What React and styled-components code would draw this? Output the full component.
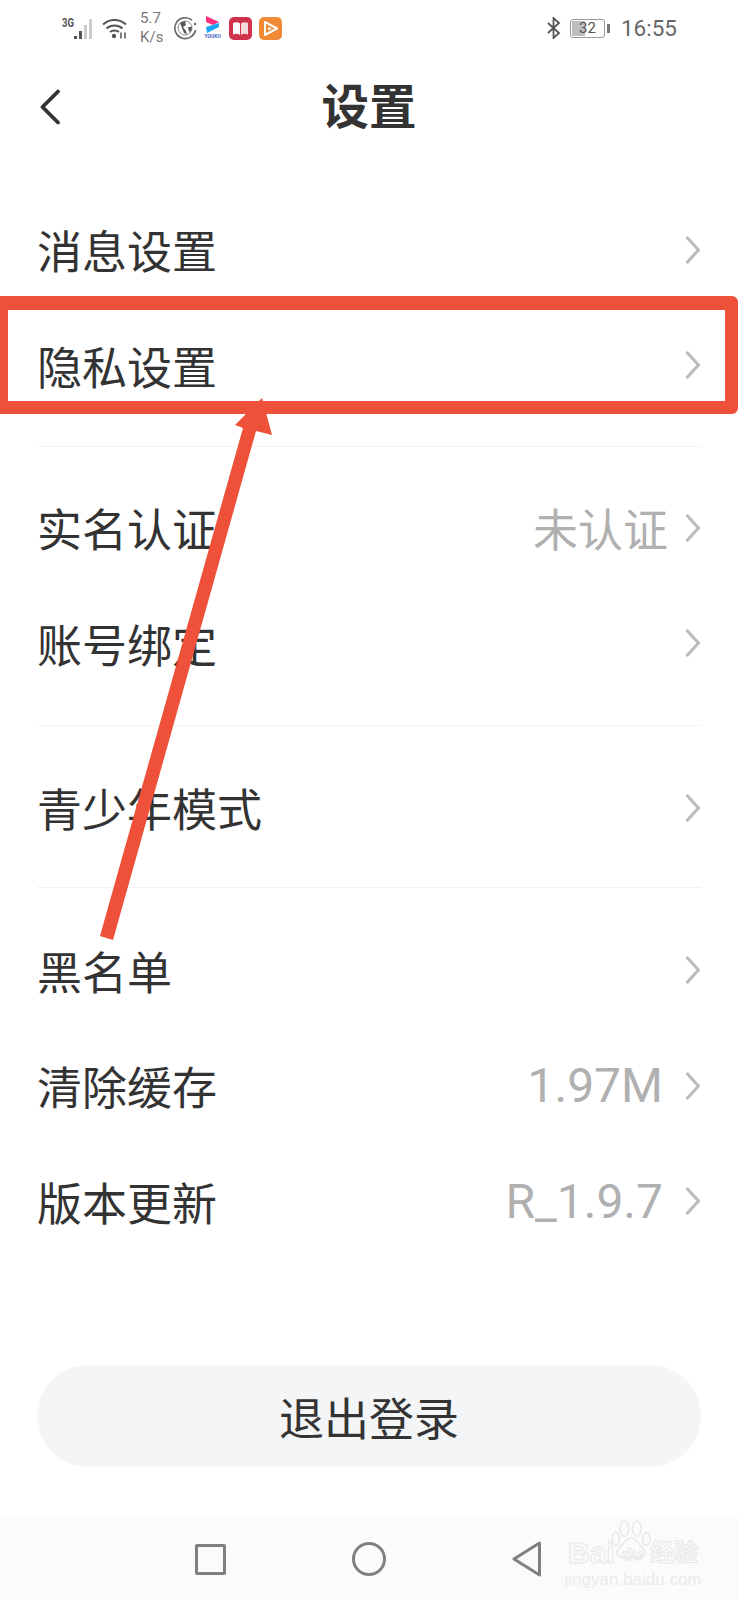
import React from "react";
import styled, { createGlobalStyle } from "styled-components";

const GlobalStyle = createGlobalStyle`
  html, body {
    margin: 0;
    padding: 0;
    background: #fff;
  }
`;

const SANS = `Roboto, "Noto Sans CJK SC", sans-serif`;

const groups = [
  {
    padding: "38px 0 19px",
    rows: [{ label: "消息设置" }, { label: "隐私设置" }],
  },
  {
    padding: "27px 0 20px",
    rows: [{ label: "实名认证", value: "未认证" }, { label: "账号绑定" }],
  },
  {
    padding: "28px 0 17px",
    rows: [{ label: "青少年模式" }],
  },
  {
    padding: "29px 0 0",
    rows: [
      { label: "黑名单" },
      { label: "清除缓存", value: "1.97M", gap: 22, size: 48 },
      { label: "版本更新", value: "R_1.9.7", gap: 22, size: 48 },
    ],
  },
];

function Chevron() {
  return (
    <ChevronSvg viewBox="0 0 16 28" fill="none">
      <path d="M2.5 2l11 12-11 12" stroke="#bcbcbc" strokeWidth="3.2" strokeLinecap="round" strokeLinejoin="round" />
    </ChevronSvg>
  );
}

function SignalIcon() {
  return (
    <svg width="20" height="22" viewBox="0 0 20 22">
      <rect x="0" y="17" width="3" height="3" fill="#555" />
      <rect x="5" y="12" width="3" height="8" fill="#555" />
      <rect x="10" y="6" width="3" height="14" fill="#ccc" />
      <rect x="15" y="0" width="3" height="20" fill="#ccc" />
    </svg>
  );
}

function WifiIcon() {
  return (
    <svg width="25" height="21" viewBox="0 0 25 21" fill="none">
      <path d="M1 6.5C7.5 .5 17.5 .5 24 6.5" stroke="#555" strokeWidth="2" />
      <path d="M4.5 10.5c4.5-4 11.5-4 16 0" stroke="#555" strokeWidth="2" />
      <path d="M8 14c2.5-2 6.5-2 9 0" stroke="#555" strokeWidth="2" />
      <circle cx="12" cy="18" r="2.2" fill="#555" />
      <path d="M19 14.5v6M23 14.5v6" stroke="#555" strokeWidth="1.5" />
    </svg>
  );
}

function GlobeIcon() {
  return (
    <svg width="23" height="24" viewBox="0 0 23 24" fill="none">
      <path d="M18 4.2A10.4 10.4 0 1 0 21.5 14" stroke="#666" strokeWidth="1.6" />
      <circle cx="21" cy="8" r="1.2" fill="#666" />
      <circle cx="11" cy="12" r="7" stroke="#888" strokeWidth="1" />
      <path d="M6 7l5-2 1 4-3 2 3 4 1 3-3-1-2-5zM14 11l4 0-1 4-2 1z" fill="#555" />
    </svg>
  );
}

function YoukuIcon() {
  return (
    <YoukuBox>
      <svg width="15" height="17" viewBox="0 0 15 17">
        <path d="M1 0l13 6-6 3-7-3z" fill="#ff2f7d" />
        <path d="M14 7l-13 4 1 6 12-6z" fill="#19a7f5" />
      </svg>
      <YoukuText>YOUKU</YoukuText>
    </YoukuBox>
  );
}

function BookIcon() {
  return (
    <svg width="23" height="23" viewBox="0 0 23 23">
      <rect width="23" height="23" rx="5" fill="#d0324c" />
      <path d="M4 6c3-1 5-1 7 .5V18c-2-1.5-4-1.5-7-.5z" fill="#fff" />
      <path d="M19 6c-3-1-5-1-7 .5V18c2-1.5 4-1.5 7-.5z" fill="#f7d9de" />
    </svg>
  );
}

function PlayIcon() {
  return (
    <svg width="23" height="23" viewBox="0 0 23 23" fill="none">
      <rect width="23" height="23" rx="5" fill="#f08a35" />
      <path d="M6 5l12 6.500-12 6.500z" stroke="#fff" strokeWidth="2" strokeLinejoin="round" />
      <path d="M9 10l4 1.500-4 2z" fill="#fff" />
    </svg>
  );
}

function BluetoothIcon() {
  return (
    <svg width="14" height="22" viewBox="0 0 14 22" fill="none">
      <path d="M1 6l11 10-5.500 5V1L12 6 1 16" stroke="#555" strokeWidth="1.8" />
    </svg>
  );
}

export default function App() {
  return (
    <Screen>
      <GlobalStyle />
      <StatusBar>
        <StatusLeft>
          <Network>
            <NetworkLabel>3G</NetworkLabel>
            <SignalIcon />
          </Network>
          <WifiIcon />
          <Speed>
            <span>5.7</span>
            <span>K/s</span>
          </Speed>
          <GlobeIcon />
          <YoukuIcon />
          <BookIcon />
          <PlayIcon />
        </StatusLeft>
        <StatusRight>
          <BluetoothIcon />
          <Battery>
            <BatteryLevel />
            <BatteryText>32</BatteryText>
          </Battery>
          <Clock>16:55</Clock>
        </StatusRight>
      </StatusBar>

      <Header>
        <BackIcon viewBox="0 0 22 36" fill="none">
          <path d="M19 2.500L3.500 18 19 33.500" stroke="#333" strokeWidth="3.800" strokeLinecap="round" strokeLinejoin="round" />
        </BackIcon>
        <Title>设置</Title>
      </Header>

      <List>
        {groups.map((group, i) => (
          <Group key={i} $first={i === 0} $padding={group.padding}>
            {group.rows.map((row) => (
              <Row key={row.label}>
                <RowLabel>{row.label}</RowLabel>
                <RowRight $gap={row.gap}>
                  {row.value && <RowValue $size={row.size}>{row.value}</RowValue>}
                  <Chevron />
                </RowRight>
              </Row>
            ))}
          </Group>
        ))}
      </List>

      <LogoutButton>退出登录</LogoutButton>

      <NavBar>
        <NavSquare />
        <NavCircle />
        <svg width="30" height="36" viewBox="0 0 30 36" fill="none">
          <path d="M27.500 2L2 18l25.500 16z" stroke="#808080" strokeWidth="3" strokeLinejoin="round" />
        </svg>
      </NavBar>

      <Watermark>
        <Paw viewBox="0 0 44 42" fill="none">
          <ellipse cx="15" cy="9" rx="4.500" ry="8" stroke="#e8e8e8" strokeWidth="1.500" />
          <ellipse cx="28" cy="9" rx="4.500" ry="8" stroke="#e8e8e8" strokeWidth="1.500" />
          <ellipse cx="6" cy="20" rx="4" ry="7" stroke="#e8e8e8" strokeWidth="1.500" />
          <ellipse cx="38" cy="20" rx="4" ry="7" stroke="#e8e8e8" strokeWidth="1.500" />
          <path d="M22 19c-6 0-8 7-13 11-4 5 0 10 6 9 5-1 9-1 14 0 6 1 10-4 6-9-5-4-7-11-13-11z" stroke="#e8e8e8" strokeWidth="1.500" />
        </Paw>
        <WatermarkBrand>
          <BrandLatin>Bai</BrandLatin>
          <DuBadge>du</DuBadge>
          <BrandCjk>经验</BrandCjk>
        </WatermarkBrand>
        <WatermarkUrl>jingyan.baidu.com</WatermarkUrl>
      </Watermark>

      <HighlightBox />
      <ArrowSvg viewBox="0 0 738 1600">
        <polygon points="262,398 272,435 256,431 113,940 100,936 243,428 235,425" fill="#ee5039" />
      </ArrowSvg>
    </Screen>
  );
}

const Screen = styled.div`
  position: relative;
  width: 738px;
  height: 1600px;
  overflow: hidden;
  background: #fff;
  display: flex;
  flex-direction: column;
  font-family: ${SANS};
  color: #333;
`;

const StatusBar = styled.div`
  height: 56px;
  padding: 0 61px 0 62px;
  display: flex;
  align-items: center;
  justify-content: space-between;
  color: #666;
`;

const StatusLeft = styled.div`
  display: flex;
  align-items: center;
  gap: 7px;
`;

const Network = styled.div`
  display: flex;
  align-items: flex-end;
  margin-right: 1px;
`;

const NetworkLabel = styled.span`
  font-size: 12px;
  font-weight: 700;
  color: #555;
  margin-bottom: 11px;
  margin-right: -3px;
  transform: scaleX(0.8);
  transform-origin: left;
`;

const Speed = styled.div`
  display: flex;
  flex-direction: column;
  font-size: 15px;
  line-height: 19px;
  width: 27px;
  margin: 0 0 0 6px;
  color: #777;
`;

const YoukuBox = styled.div`
  display: flex;
  flex-direction: column;
  align-items: center;
  width: 19px;
  margin: 0 0 0 -1px;
`;

const YoukuText = styled.span`
  font-size: 5px;
  font-weight: 700;
  line-height: 7px;
  color: #4a62c8;
`;

const StatusRight = styled.div`
  display: flex;
  align-items: center;
  gap: 9px;
`;

const Battery = styled.div`
  position: relative;
  width: 35px;
  height: 19px;
  box-sizing: border-box;
  border: 1.500px solid #999;
  border-radius: 3px;
  display: flex;
  align-items: center;
  justify-content: center;
  margin-right: 7px;

  &::after {
    content: "";
    position: absolute;
    right: -6px;
    top: 4px;
    width: 3px;
    height: 9px;
    background: #777;
  }
`;

const BatteryLevel = styled.div`
  position: absolute;
  left: 1px;
  top: 1px;
  bottom: 1px;
  width: 13px;
  background: #bdbdbd;
`;

const BatteryText = styled.span`
  position: relative;
  font-size: 15px;
  color: #555;
`;

const Clock = styled.span`
  font-size: 22.500px;
  color: #666;
`;

const Header = styled.div`
  position: relative;
  height: 102px;
  padding-bottom: 8px;
  box-sizing: border-box;
  display: flex;
  align-items: center;
  justify-content: center;
`;

const BackIcon = styled.svg`
  position: absolute;
  left: 39px;
  top: 33px;
  width: 22px;
  height: 36px;
`;

const Title = styled.h1`
  margin: 0;
  font-size: 47.500px;
  font-weight: 700;
  color: #333;
`;

const List = styled.div`
  padding: 0 37px;
`;

const Group = styled.div`
  padding: ${(p) => p.$padding};
  border-top: ${(p) => (p.$first ? "none" : "1px solid #f2f2f2")};
`;

const Row = styled.div`
  height: 115.500px;
  box-sizing: border-box;
  padding-bottom: 8px;
  display: flex;
  align-items: center;
  justify-content: space-between;
`;

const RowLabel = styled.span`
  font-size: 45px;
  color: #333;
`;

const RowRight = styled.div`
  display: flex;
  align-items: center;
  gap: ${(p) => p.$gap || 17}px;
`;

const RowValue = styled.span`
  font-size: ${(p) => p.$size || 45}px;
  color: #b0b0b0;
`;

const ChevronSvg = styled.svg`
  width: 16px;
  height: 28px;
`;

const LogoutButton = styled.div`
  margin: 102px 37px 0;
  height: 102px;
  box-sizing: border-box;
  border-radius: 51px;
  background: #f4f5f6;
  display: flex;
  align-items: center;
  justify-content: center;
  font-size: 45px;
  color: #333;
`;

const NavBar = styled.div`
  position: absolute;
  left: 0;
  right: 0;
  bottom: 0;
  height: 82px;
  background: #fbfbfb;
  box-sizing: border-box;
  padding-left: 195px;
  display: flex;
  align-items: center;
  gap: 126px;
`;

const NavSquare = styled.div`
  width: 31px;
  height: 31px;
  box-sizing: border-box;
  border: 3px solid #808080;
  border-radius: 2px;
`;

const NavCircle = styled.div`
  width: 34px;
  height: 34px;
  box-sizing: border-box;
  border: 3px solid #808080;
  border-radius: 50%;
`;

const Watermark = styled.div`
  position: absolute;
  left: 566px;
  top: 1520px;
  width: 134px;
  display: flex;
  flex-direction: column;
  align-items: center;
`;

const Paw = styled.svg`
  position: absolute;
  left: 44px;
  top: 0;
  width: 42px;
  height: 40px;
`;

const WatermarkBrand = styled.div`
  margin-top: 17px;
  display: flex;
  align-items: center;
  font-family: "Liberation Sans", "Noto Sans CJK SC", sans-serif;
  line-height: 28px;
  font-weight: 700;
  color: #fbfbfb;
  -webkit-text-stroke: 1px #e8e8e8;
  white-space: nowrap;
`;

const BrandLatin = styled.span`
  font-size: 30px;
  width: 46px;
`;

const DuBadge = styled.span`
  font-size: 17px;
  width: 36px;
  padding-top: 4px;
  text-align: center;
`;

const BrandCjk = styled.span`
  font-size: 24px;
`;

const WatermarkUrl = styled.div`
  margin-top: 2px;
  font-family: "Liberation Sans", sans-serif;
  font-size: 17px;
  line-height: 18px;
  color: #ebebeb;
  white-space: nowrap;
`;

const HighlightBox = styled.div`
  position: absolute;
  left: -6px;
  top: 296px;
  width: 744px;
  height: 118px;
  box-sizing: border-box;
  border: solid #ee5039;
  border-width: 14px 13px 13px 14px;
  border-radius: 6px;
`;

const ArrowSvg = styled.svg`
  position: absolute;
  left: 0;
  top: 0;
  width: 738px;
  height: 1600px;
  pointer-events: none;
`;
